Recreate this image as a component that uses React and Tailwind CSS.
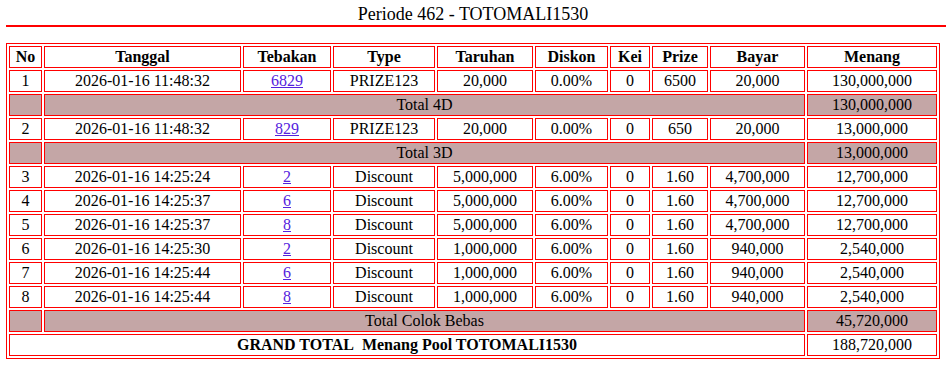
const cols = [
  ['No', 'w-[33px]'],
  ['Tanggal', 'w-[197px]'],
  ['Tebakan', 'w-[88px]'],
  ['Type', 'w-[102px]'],
  ['Taruhan', 'w-[96px]'],
  ['Diskon', 'w-[73px]'],
  ['Kei', 'w-[40px]'],
  ['Prize', 'w-[56px]'],
  ['Bayar', 'w-[95px]'],
  ['Menang', 'w-[130px]'],
];

const sections = [
  {
    rows: [[1, '2026-01-16 11:48:32', '6829', 'PRIZE123', '20,000', '0.00%', '0', '6500', '20,000', '130,000,000']],
    total: ['Total 4D', '130,000,000'],
  },
  {
    rows: [[2, '2026-01-16 11:48:32', '829', 'PRIZE123', '20,000', '0.00%', '0', '650', '20,000', '13,000,000']],
    total: ['Total 3D', '13,000,000'],
  },
  {
    rows: [
      [3, '2026-01-16 14:25:24', '2', 'Discount', '5,000,000', '6.00%', '0', '1.60', '4,700,000', '12,700,000'],
      [4, '2026-01-16 14:25:37', '6', 'Discount', '5,000,000', '6.00%', '0', '1.60', '4,700,000', '12,700,000'],
      [5, '2026-01-16 14:25:37', '8', 'Discount', '5,000,000', '6.00%', '0', '1.60', '4,700,000', '12,700,000'],
      [6, '2026-01-16 14:25:30', '2', 'Discount', '1,000,000', '6.00%', '0', '1.60', '940,000', '2,540,000'],
      [7, '2026-01-16 14:25:44', '6', 'Discount', '1,000,000', '6.00%', '0', '1.60', '940,000', '2,540,000'],
      [8, '2026-01-16 14:25:44', '8', 'Discount', '1,000,000', '6.00%', '0', '1.60', '940,000', '2,540,000'],
    ],
    total: ['Total Colok Bebas', '45,720,000'],
  },
];

const cell = 'border border-[#ff0000] h-[22px] p-0 leading-[20px] text-center align-middle';
const gray = 'bg-[#c4a6a6]';

export default function App() {
  return (
    <div className="w-[946px] h-[370px] bg-white text-black font-['Liberation_Serif',serif] text-[16px] overflow-hidden">
      <div className="pt-[4px] h-[25px] leading-[21px] text-[18px] text-center">Periode 462 - TOTOMALI1530</div>
      <div className="ml-[6px] h-[2px] bg-[#ff0000]"></div>

      <table className="mt-[16px] ml-[6px] w-[934px] table-fixed border-separate border-spacing-[2px] border border-[#ff0000]">
        <thead>
          <tr>
            {cols.map(([label, w]) => (
              <th key={label} className={`${cell} ${w} font-bold`}>{label}</th>
            ))}
          </tr>
        </thead>
        <tbody>
          {sections.map((sec, si) => (
            <Section key={si} sec={sec} />
          ))}
          <tr>
            <td colSpan={9} className={`${cell} font-bold`}>GRAND TOTAL&nbsp; Menang Pool TOTOMALI1530</td>
            <td className={cell}>188,720,000</td>
          </tr>
        </tbody>
      </table>
    </div>
  );
}

function Section({ sec }) {
  return (
    <>
      {sec.rows.map((r) => (
        <tr key={r[0]}>
          {r.map((v, i) => (
            <td key={i} className={cell}>
              {i === 2 ? <a href="#" className="text-[#5522dd] underline">{v}</a> : v}
            </td>
          ))}
        </tr>
      ))}
      <tr>
        <td className={`${cell} ${gray}`}></td>
        <td colSpan={8} className={`${cell} ${gray}`}>{sec.total[0]}</td>
        <td className={`${cell} ${gray}`}>{sec.total[1]}</td>
      </tr>
    </>
  );
}
